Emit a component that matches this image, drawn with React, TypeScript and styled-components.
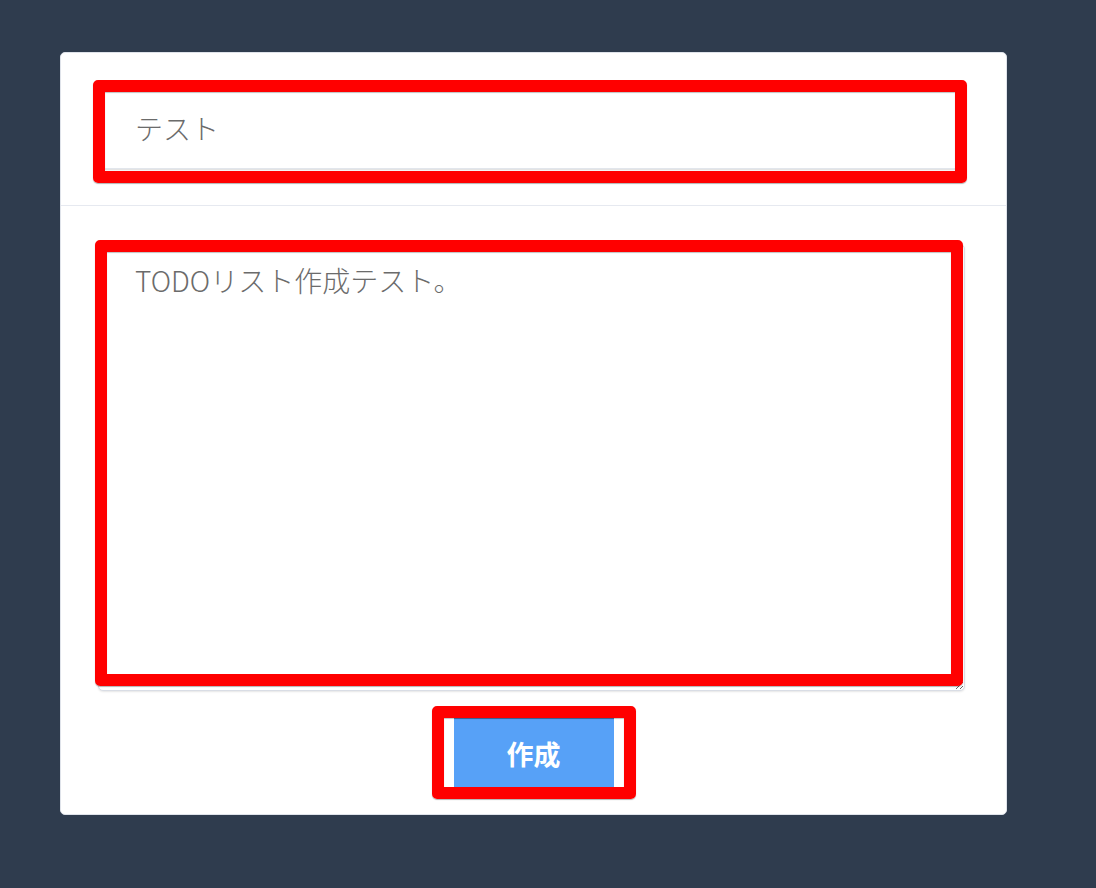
import styled, { createGlobalStyle } from 'styled-components';
import { useState } from 'react';

const GlobalStyle = createGlobalStyle`
  html, body {
    margin: 0;
    padding: 0;
    background-color: #2f3c4e;
  }
  body {
    font-family: "Noto Sans CJK JP", "Noto Sans", sans-serif;
  }
  * {
    box-sizing: border-box;
  }
`;

type FrameProps = {
  $top: number;
  $right: number;
  $bottom: number;
  $left: number;
};

const App = () => {
  const [title, setTitle] = useState('テスト');
  const [content, setContent] = useState('TODOリスト作成テスト。');

  return (
    <>
      <GlobalStyle />
      <Page>
        <Card>
          <Header>
            <Field>
              <TitleInput
                type="text"
                value={title}
                onChange={(e) => setTitle(e.target.value)}
              />
              <Frame $top={-7} $right={-5} $bottom={-14} $left={-7} />
            </Field>
          </Header>
          <Body>
            <Field>
              <ContentInput
                value={content}
                onChange={(e) => setContent(e.target.value)}
              />
              <Frame $top={-4} $right={2} $bottom={5} $left={-3} />
            </Field>
            <Footer>
              <Field>
                <CreateButton type="button">作成</CreateButton>
                <Frame $top={-12} $right={-22} $bottom={-12} $left={-22} />
              </Field>
            </Footer>
          </Body>
        </Card>
      </Page>
    </>
  );
};

export default App;

const Page = styled.div`
  width: 1096px;
  height: 888px;
  padding: 52px 0 0 60px;
`;

const Card = styled.div`
  width: 947px;
  height: 763px;
  background-color: #ffffff;
  border: 1px solid #dfe3ea;
  border-radius: 5px;
  display: flex;
  flex-direction: column;
`;

const Header = styled.div`
  padding: 34px 44px 36px 39px;
  border-bottom: 1px solid #e6e9f0;
`;

const Field = styled.div`
  position: relative;
`;

const Frame = styled.div<FrameProps>`
  position: absolute;
  top: ${(p) => p.$top}px;
  right: ${(p) => p.$right}px;
  bottom: ${(p) => p.$bottom}px;
  left: ${(p) => p.$left}px;
  border: 12px solid #ff0000;
  border-radius: 5px;
  box-shadow: 0 1px 1px rgba(0, 0, 0, 0.3), inset 0 1px 1px rgba(0, 0, 0, 0.25);
  pointer-events: none;
`;

const TitleInput = styled.input`
  display: block;
  width: 100%;
  height: 82px;
  padding: 0 34px;
  border: 1px solid #e2e6ec;
  border-radius: 4px;
  box-shadow: 0 1px 2px rgba(0, 0, 0, 0.15);
  font-family: "Noto Sans CJK JP", "Noto Sans", sans-serif;
  font-size: 28px;
  font-weight: 300;
  color: #6b6b6b;
  outline: none;
`;

const Body = styled.div`
  flex: 1;
  padding: 38px 41px 0 37px;
  display: flex;
  flex-direction: column;
`;

const ContentInput = styled.textarea`
  display: block;
  width: 100%;
  height: 447px;
  padding: 14px 36px;
  border: 1px solid #d9dde5;
  border-radius: 5px;
  box-shadow: 0 1px 2px rgba(0, 0, 0, 0.1);
  font-family: "Noto Sans CJK JP", "Noto Sans", sans-serif;
  font-size: 28px;
  font-weight: 300;
  line-height: 1.5;
  color: #6b6b6b;
  outline: none;
`;

const Footer = styled.div`
  display: flex;
  justify-content: center;
  padding: 27px 0 0 4px;
`;

const CreateButton = styled.button`
  display: block;
  width: 160px;
  height: 69px;
  border: none;
  border-top: 1px solid #4a7fc0;
  background-color: #57a1f7;
  color: #ffffff;
  font-family: "Noto Sans CJK JP", "Noto Sans", sans-serif;
  font-size: 27px;
  font-weight: 700;
  cursor: pointer;
`;
